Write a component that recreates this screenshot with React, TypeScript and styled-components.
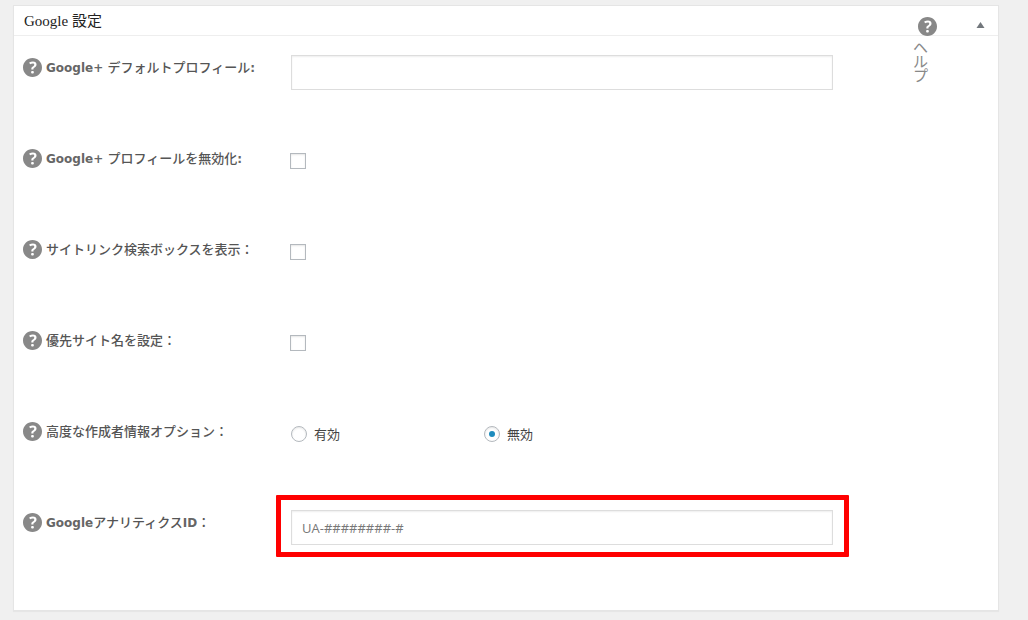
import React, { useState } from "react";
import styled, { createGlobalStyle } from "styled-components";

const GlobalStyle = createGlobalStyle`
  *, *::before, *::after { box-sizing: border-box; }
  body {
    margin: 0;
    background: #f0f0f0;
    color: #444;
    font: 13px/20px "Open Sans", "Noto Sans CJK JP", sans-serif;
  }
`;

const Page = styled.main`
  padding: 5px 29px 9px 13px;
`;

const Panel = styled.section`
  position: relative;
  background: #fff;
  border: 1px solid #e5e5e5;
  box-shadow: 0 1px 1px rgba(0, 0, 0, 0.04);
`;

const PanelHeader = styled.header`
  display: flex;
  align-items: center;
  justify-content: space-between;
  height: 30px;
  padding: 0 10px;
  border-bottom: 1px solid #eee;
`;

const Title = styled.h2`
  margin: 0;
  color: #222;
  font: 400 15px/20px "Liberation Serif", "Noto Sans CJK JP", serif;
`;

const ToggleButton = styled.button`
  display: flex;
  align-items: center;
  justify-content: center;
  width: 15px;
  height: 20px;
  padding: 9px 0 0;
  border: 0;
  background: none;
  color: #72777c;
`;

const HelpLink = styled.a`
  position: absolute;
  top: 11px;
  right: 60px;
  display: flex;
  flex-direction: column;
  gap: 4px;
  width: 20px;
  color: #888;
  font-size: 15px;
  line-height: 14px;
  text-decoration: none;
`;

const HelpText = styled.span`
  width: 15px;
  margin-left: -5px;
  word-break: break-all;
`;

const Options = styled.form`
  padding-bottom: 28px;
`;

const Row = styled.div`
  display: grid;
  grid-template-columns: 268px minmax(0, 1fr);
  align-items: start;
  height: 91px;
  padding: 19px 165px 0 9px;
`;

const LabelCell = styled.div`
  display: flex;
  align-items: center;
  gap: 4px;
  height: 24px;
  color: #555;
  font-weight: 500;
`;

const Latin = styled.span`
  color: #666;
  font-family: "DejaVu Sans", sans-serif;
  font-size: 12px;
  font-weight: 700;
`;

const IconButton = styled.button`
  display: flex;
  padding: 0;
  border: 0;
  background: none;
  color: #888;
`;

const Control = styled.div<{ $inset?: boolean }>`
  position: relative;
  display: flex;
  padding-top: ${(p) => (p.$inset ? "7px" : "0")};
  margin-left: ${(p) => (p.$inset ? "-1px" : "0")};
`;

const Highlighted = styled(Control)`
  &::after {
    content: "";
    position: absolute;
    inset: -15px -16px -12px -15px;
    border: 5px solid #f00;
    border-radius: 1px;
    pointer-events: none;
  }
`;

const TextInput = styled.input`
  width: 100%;
  height: 35px;
  padding: 0 10px;
  border: 1px solid #ddd;
  border-radius: 0;
  background: #fff;
  box-shadow: inset 0 1px 2px rgba(0, 0, 0, 0.07);
  color: #32373c;
  font: inherit;
  &::placeholder { color: #777; opacity: 1; }
`;

const Tick = styled.input`
  appearance: none;
  flex: none;
  width: 16px;
  height: 16px;
  margin: 0;
  border: 1px solid #b4b9be;
  background: #fff;
  box-shadow: inset 0 1px 2px rgba(0, 0, 0, 0.1);
  &:checked { background: #1e8cbe; }
`;

const Radio = styled(Tick)`
  display: grid;
  place-items: center;
  border-radius: 50%;
  &:checked { background: #fff; }
  &:checked::before {
    content: "";
    width: 6px;
    height: 6px;
    border-radius: 50%;
    background: #1e8cbe;
  }
`;

const RadioGroup = styled.div`
  display: grid;
  grid-template-columns: 193px auto;
  padding-top: 5px;
`;

const RadioLabel = styled.label`
  display: flex;
  align-items: center;
  gap: 7px;
`;

const HelpIcon = () => (
  <svg width="19" height="19" viewBox="3 3 14 14" fill="currentColor" aria-hidden="true">
    <path d="M17 10c0-3.87-3.14-7-7-7-3.87 0-7 3.13-7 7s3.13 7 7 7c3.86 0 7-3.13 7-7zm-6.3 1.48H9.14v-.43c0-.38.08-.7.24-.98s.46-.57.88-.89c.41-.29.68-.53.81-.71.14-.18.2-.39.2-.62 0-.25-.09-.44-.28-.58-.19-.13-.45-.19-.79-.19-.58 0-1.25.19-2 .57l-.64-1.28c.87-.49 1.8-.74 2.77-.74.81 0 1.45.2 1.92.58.48.39.71.91.71 1.55 0 .43-.09.8-.29 1.11-.19.32-.57.67-1.11 1.06-.38.28-.61.49-.71.63-.1.15-.15.34-.15.57v.35zm-1.47 2.74c-.18-.17-.27-.42-.27-.73 0-.33.08-.58.26-.75s.43-.25.77-.25c.32 0 .57.09.75.26s.27.42.27.74c0 .3-.09.55-.27.72-.18.18-.43.27-.75.27-.33 0-.58-.09-.76-.26z" />
  </svg>
);

const OptionLabel = ({ id, children }: { id: string; children: React.ReactNode }) => (
  <LabelCell>
    <IconButton type="button" aria-label="ヘルプ">
      <HelpIcon />
    </IconButton>
    <label id={id + "-label"} htmlFor={id}>{children}</label>
  </LabelCell>
);

const checks = [
  { id: "disable-profile", text: <><Latin>Google+ </Latin>プロフィールを無効化<Latin>:</Latin></> },
  { id: "sitelinks", text: "サイトリンク検索ボックスを表示：" },
  { id: "site-name", text: "優先サイト名を設定：" },
];

export default function App() {
  const [author, setAuthor] = useState("off");
  return (
    <Page>
      <GlobalStyle />
      <Panel>
        <PanelHeader>
          <Title>Google 設定</Title>
          <ToggleButton type="button" aria-label="パネルを閉じる">
            <svg width="9" height="6" viewBox="0 0 9 6" fill="currentColor" aria-hidden="true">
              <path d="M4.5 0 8.5 6h-8z" />
            </svg>
          </ToggleButton>
        </PanelHeader>
        <HelpLink href="#help">
          <HelpIcon />
          <HelpText>ヘルプ</HelpText>
        </HelpLink>
        <Options>
          <Row>
            <OptionLabel id="profile"><Latin>Google+ </Latin>デフォルトプロフィール<Latin>:</Latin></OptionLabel>
            <Control>
              <TextInput id="profile" type="text" />
            </Control>
          </Row>
          {checks.map((c) => (
            <Row key={c.id}>
              <OptionLabel id={c.id}>{c.text}</OptionLabel>
              <Control $inset>
                <Tick id={c.id} type="checkbox" />
              </Control>
            </Row>
          ))}
          <Row>
            <OptionLabel id="author-on">高度な作成者情報オプション：</OptionLabel>
            <RadioGroup role="radiogroup" aria-labelledby="author-on-label">
              <RadioLabel>
                <Radio id="author-on" type="radio" name="author" checked={author === "on"} onChange={() => setAuthor("on")} />
                有効
              </RadioLabel>
              <RadioLabel>
                <Radio type="radio" name="author" checked={author === "off"} onChange={() => setAuthor("off")} />
                無効
              </RadioLabel>
            </RadioGroup>
          </Row>
          <Row>
            <OptionLabel id="analytics"><Latin>Google</Latin>アナリティクス<Latin>ID</Latin>：</OptionLabel>
            <Highlighted>
              <TextInput id="analytics" type="text" placeholder="UA-########-#" />
            </Highlighted>
          </Row>
        </Options>
      </Panel>
    </Page>
  );
}
